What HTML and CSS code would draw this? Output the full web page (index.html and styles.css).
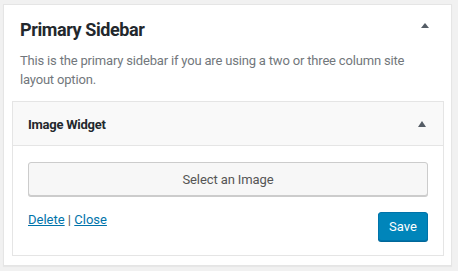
FILE: index.html
```html
<!DOCTYPE html>
<html>
<head>
<meta charset="utf-8">
<link rel="stylesheet" href="styles.css">
</head>
<body>
<div class="sidebar">
  <div class="sidebar-head">
    <h2 class="sidebar-title">Primary Sidebar</h2>
    <svg class="toggle" width="8" height="5" viewBox="0 0 8 5"><path d="M4 0 L8 5 L0 5 Z" fill="#555d66"/></svg>
  </div>
  <p class="sidebar-desc">This is the primary sidebar if you are using a two or three column site layout option.</p>
  <div class="widget">
    <div class="widget-head">
      <h3 class="widget-title">Image Widget</h3>
      <svg class="toggle" width="8" height="6" viewBox="0 0 8 6"><path d="M4 0 L8 6 L0 6 Z" fill="#555d66"/></svg>
    </div>
    <div class="widget-body">
      <button class="select-btn">Select an Image</button>
      <div class="widget-actions">
        <div class="links"><a href="#">Delete</a> | <a href="#">Close</a></div>
        <button class="save-btn">Save</button>
      </div>
    </div>
  </div>
</div>
</body>
</html>
```

FILE: styles.css
```css
html, body {
  margin: 0;
  padding: 0;
  background: #f1f1f1;
}
body {
  padding: 4px 6px 5px 3px;
  font-family: Roboto, "Noto Sans", sans-serif;
  color: #23282d;
  font-size: 13px;
}
.sidebar {
  background: #fff;
  border: 1px solid #e5e5e5;
  box-shadow: 0 1px 1px rgba(0,0,0,0.04);
  padding: 0 7px 9px 8px;
}
.sidebar-head {
  display: flex;
  align-items: flex-start;
  justify-content: space-between;
  padding: 12px 15px 0 8px;
}
.sidebar-title {
  margin: 0;
  font-size: 18px;
  font-weight: 700;
  line-height: 25px;
  letter-spacing: -0.4px;
  color: #23282d;
}
.sidebar-head .toggle {
  margin-top: 6px;
}
.sidebar-desc {
  margin: 9px 0 0 8px;
  color: #72777c;
  font-size: 13px;
  line-height: 19px;
  letter-spacing: -0.18px;
  padding-right: 20px;
}
.widget {
  margin-top: 12px;
  border: 1px solid #e5e5e5;
}
.widget-head {
  display: flex;
  align-items: center;
  justify-content: space-between;
  height: 43px;
  background: #f9f9f9;
  border-bottom: 1px solid #e5e5e5;
  padding: 0 17px 0 15px;
}
.widget-title {
  margin: 0;
  font-size: 13px;
  font-weight: 700;
  letter-spacing: -0.25px;
  color: #23282d;
  padding-top: 1px;
}
.widget-body {
  padding: 16px 15px 14px 15px;
}
.select-btn {
  display: block;
  width: 100%;
  height: 34px;
  background: #f7f7f7;
  border: 1px solid #ccc;
  border-radius: 3px;
  box-shadow: 0 1px 0 #ccc;
  color: #555;
  font-family: Roboto, "Noto Sans", sans-serif;
  font-size: 13px;
  letter-spacing: -0.1px;
  padding: 0;
}
.widget-actions {
  display: flex;
  justify-content: space-between;
  align-items: flex-start;
  margin-top: 16px;
}
.links {
  color: #555;
  font-size: 13px;
  line-height: 15px;
  padding-top: 0;
}
.links a {
  color: #0073aa;
}
.save-btn {
  height: 29px;
  width: 50px;
  background: #0085ba;
  border: 1px solid #0073aa;
  border-radius: 3px;
  box-shadow: 0 1px 0 #006799;
  color: #fff;
  font-family: Roboto, "Noto Sans", sans-serif;
  font-size: 13px;
  padding: 0;
}
```
